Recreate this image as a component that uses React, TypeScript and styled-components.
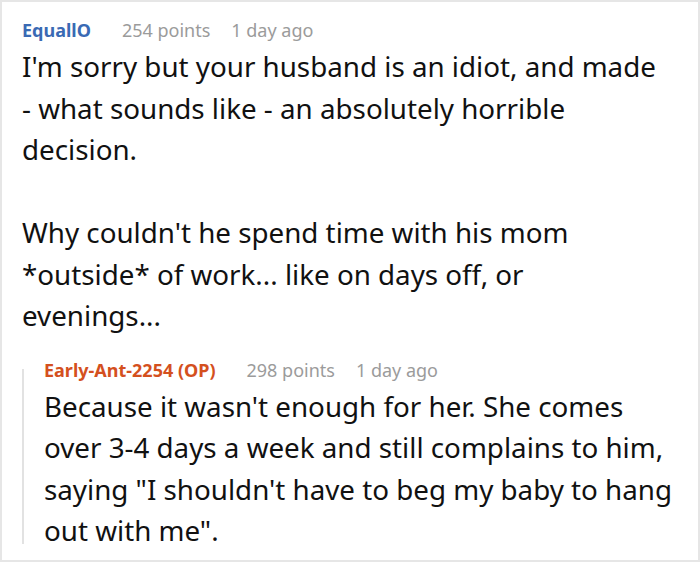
import styled, { createGlobalStyle } from "styled-components";

const GlobalStyle = createGlobalStyle`
    html, body {
        margin: 0;
        padding: 0;
        background: #ffffff;
    }
    body {
        font-family: "Noto Sans", "Open Sans", sans-serif;
    }
`;

const Frame = styled.div`
    box-sizing: border-box;
    width: 700px;
    height: 562px;
    border: 2px solid #e6e6e6;
    background: #ffffff;
    padding: 16px 34px 0 20px;
    overflow: hidden;
`;

const Comment = styled.div`
    display: flex;
    flex-direction: column;
`;

const Meta = styled.div`
    display: flex;
    align-items: baseline;
    font-size: 18px;
    line-height: 24px;
    white-space: nowrap;
`;

const Author = styled.span<{ $op?: boolean }>`
    font-weight: 700;
    color: ${(props) => (props.$op ? "#d4501e" : "#3a6ab4")};
`;

const Points = styled.span`
    color: #9b9b9b;
    margin-left: 31px;
`;

const Time = styled.span`
    color: #9b9b9b;
    margin-left: 21px;
`;

const Body = styled.div`
    font-size: 27.75px;
    line-height: 41.5px;
    color: #111111;
    margin-top: 4px;

    p {
        margin: 0;
    }
    p + p {
        margin-top: 41.5px;
    }
`;

// the grey thread line starts a little below the top of the reply header
const Reply = styled.div`
    position: relative;
    margin-top: 21px;
    margin-right: -12px;
    padding-left: 22px;

    &::before {
        content: "";
        position: absolute;
        left: 0;
        top: 11px;
        bottom: 8px;
        width: 2px;
        background: #e2e2e2;
    }
`;

type CommentData = {
    author: string;
    op?: boolean;
    points: number;
    time: string;
    paragraphs: string[];
};

const parent: CommentData = {
    author: "EquallO",
    points: 254,
    time: "1 day ago",
    paragraphs: [
        "I'm sorry but your husband is an idiot, and made - what sounds like - an absolutely horrible decision.",
        "Why couldn't he spend time with his mom *outside* of work... like on days off, or evenings...",
    ],
};

const reply: CommentData = {
    author: "Early-Ant-2254 (OP)",
    op: true,
    points: 298,
    time: "1 day ago",
    paragraphs: [
        "Because it wasn't enough for her. She comes over 3-4 days a week and still complains to him, saying \"I shouldn't have to beg my baby to hang out with me\".",
    ],
};

function CommentBlock({ data }: { data: CommentData }) {
    return (
        <Comment>
            <Meta>
                <Author $op={data.op}>{data.author}</Author>
                <Points>{data.points} points</Points>
                <Time>{data.time}</Time>
            </Meta>
            <Body>
                {data.paragraphs.map((text, index) => (
                    <p key={index}>{text}</p>
                ))}
            </Body>
        </Comment>
    );
}

export default function App() {
    return (
        <>
            <GlobalStyle />
            <Frame>
                <CommentBlock data={parent} />
                <Reply>
                    <CommentBlock data={reply} />
                </Reply>
            </Frame>
        </>
    );
}
